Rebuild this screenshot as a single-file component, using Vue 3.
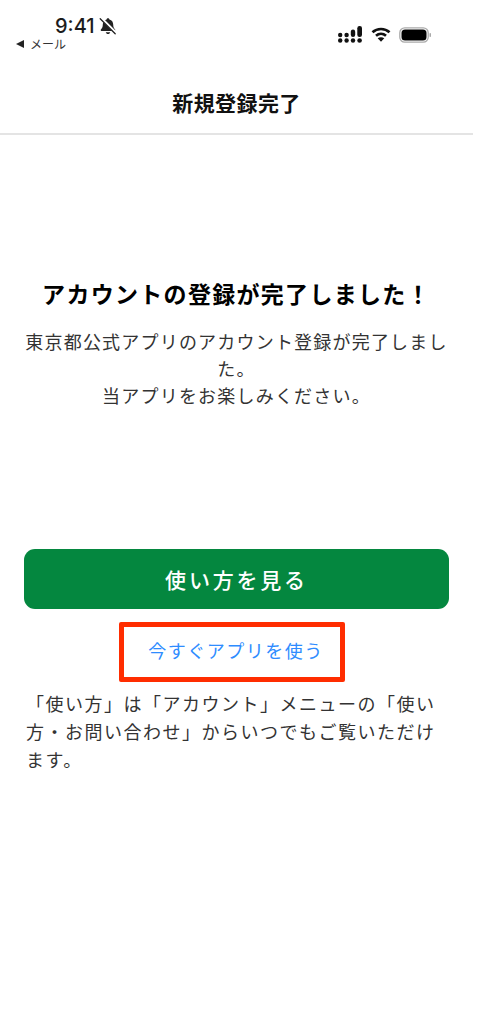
<script setup>
const title = '新規登録完了'
</script>

<template>
  <div class="page">
    <header class="top">
      <div class="status">
        <div class="status-left">
          <div class="time-row">
            <span class="time">9:41</span>
            <svg class="bell" width="18" height="18" viewBox="0 0 18 18" aria-hidden="true">
              <path d="M9 1.200c.8 0 1.300.5 1.400 1.200 2.500.6 3.800 2.600 3.800 5.200 0 2.600.7 3.900 1.900 5 .5.5.2 1.300-.5 1.300H2.400c-.7 0-1-.8-.5-1.300 1.200-1.100 1.900-2.400 1.900-5 0-2.600 1.300-4.600 3.800-5.200C7.700 1.700 8.200 1.200 9 1.200z" fill="#222"/>
              <path d="M6.800 15.200h4.400C11 16.400 10.100 17 9 17s-2-.6-2.200-1.800z" fill="#222"/>
              <path d="M2 1 17 16" stroke="#fff" stroke-width="2.600"/>
              <path d="M1.200 1.800 16.200 16.800" stroke="#222" stroke-width="1.300" stroke-linecap="round"/>
            </svg>
          </div>
          <div class="back"><span class="tri"></span><span>メール</span></div>
        </div>
        <div class="status-right">
          <svg width="25" height="17" viewBox="0 0 25 17" aria-hidden="true" fill="#111">
            <circle cx="2.200" cy="9" r="2.200"/><circle cx="2.200" cy="14.500" r="2.200"/>
            <circle cx="8.600" cy="9" r="2.200"/><circle cx="8.600" cy="14.500" r="2.200"/>
            <rect x="12.800" y="3.500" width="4.400" height="7.500" rx="2.200"/><circle cx="15" cy="14.500" r="2.200"/>
            <rect x="19.300" y="0" width="4.700" height="11" rx="2.200"/><circle cx="21.600" cy="14.500" r="2.300"/>
          </svg>
          <svg width="20" height="15" viewBox="0 0 20 15" aria-hidden="true">
            <path d="M1.500 5.200C6.200.9 13.800.9 18.500 5.200" fill="none" stroke="#111" stroke-width="2.700"/>
            <path d="M5 8.800c2.900-2.500 7.100-2.500 10 0" fill="none" stroke="#111" stroke-width="2.700"/>
            <path d="M10 14.800 6.700 11.300c1.900-1.400 4.700-1.400 6.600 0z" fill="#111"/>
          </svg>
          <svg width="33" height="16" viewBox="0 0 33 16" aria-hidden="true">
            <rect x=".8" y=".8" width="28.400" height="14.400" rx="5" fill="none" stroke="#aaa" stroke-width="1.300"/>
            <rect x="2.500" y="2.500" width="25" height="11" rx="3.500" fill="#000"/>
            <rect x="30.500" y="6" width="1.500" height="4" rx=".7" fill="#aaa"/>
          </svg>
        </div>
      </div>
      <h1 class="title">{{ title }}</h1>
    </header>

    <main class="main">
      <h2 class="heading">アカウントの登録が完了しました！</h2>
      <p class="lead">東京都公式アプリのアカウント登録が完了しました。<br>当アプリをお楽しみください。</p>
      <button class="primary" type="button">使い方を見る</button>
      <a class="now" href="#" @click.prevent>今すぐアプリを使う</a>
      <p class="note">「使い方」は「アカウント」メニューの「使い方・お問い合わせ」からいつでもご覧いただけます。</p>
    </main>
  </div>
</template>

<style>
html, body { background: #fff; }
</style>

<style scoped>
.page {
  width: 473px;
  min-height: 1024px;
  background: #fff;
  font-family: "Noto Sans CJK JP", "Liberation Sans", sans-serif;
  color: #111;
}
.top {
  height: 135px;
  box-sizing: border-box;
  border-bottom: 2px solid #e4e4e4;
}
.status {
  height: 87px;
  padding: 14px 41px 0 16px;
  box-sizing: border-box;
  display: flex;
  justify-content: space-between;
  align-items: flex-start;
}
.time-row {
  display: flex;
  align-items: center;
  gap: 4px;
  height: 24px;
  margin-left: 39px;
}
.time {
  font-family: Inter, "Liberation Sans", sans-serif;
  font-size: 20px;
  font-weight: 500;
  line-height: 24px;
  color: #1c1c1c;
}
.back {
  display: flex;
  align-items: center;
  gap: 6px;
  height: 14px;
  margin-top: -1px;
  font-size: 12px;
  line-height: 14px;
  color: #333;
}
.tri {
  width: 0;
  height: 0;
  border-top: 4px solid transparent;
  border-bottom: 4px solid transparent;
  border-right: 8px solid #222;
}
.status-right {
  display: flex;
  align-items: center;
  gap: 8px;
  margin-top: 12px;
}
.title {
  margin: 0;
  text-align: center;
  font-size: 21px;
  font-weight: 700;
  line-height: 30px;
  color: #111;
  letter-spacing: .4px;
}
.main {
  padding: 0 24px;
  display: flex;
  flex-direction: column;
  align-items: stretch;
}
.heading {
  margin: 140px 0 0;
  text-align: center;
  font-size: 23px;
  font-weight: 700;
  line-height: 36px;
  letter-spacing: 1.300px;
  color: #000;
}
.lead {
  margin: 17px 0 0;
  text-align: center;
  font-size: 18px;
  line-height: 27px;
  letter-spacing: 1.200px;
  color: #333;
}
.primary {
  margin-top: 140px;
  height: 60px;
  border: 0;
  border-radius: 11px;
  background: #04873f;
  color: #fff;
  font-family: inherit;
  font-size: 21px;
  font-weight: 500;
  letter-spacing: 2.800px;
}
.now {
  align-self: flex-start;
  margin: 13px 0 0 95px;
  width: 226px;
  height: 60px;
  box-sizing: border-box;
  padding: 0 0 5px 8px;
  border: 5px solid #ff2d00;
  border-radius: 2px;
  display: flex;
  align-items: center;
  justify-content: center;
  color: #2e8cff;
  font-size: 18px;
  letter-spacing: 1.500px;
  text-decoration: none;
}
.note {
  margin: 7px 0 0;
  padding: 0 4px 0 2px;
  font-size: 18px;
  line-height: 28px;
  letter-spacing: 1.500px;
  color: #333;
}
</style>
